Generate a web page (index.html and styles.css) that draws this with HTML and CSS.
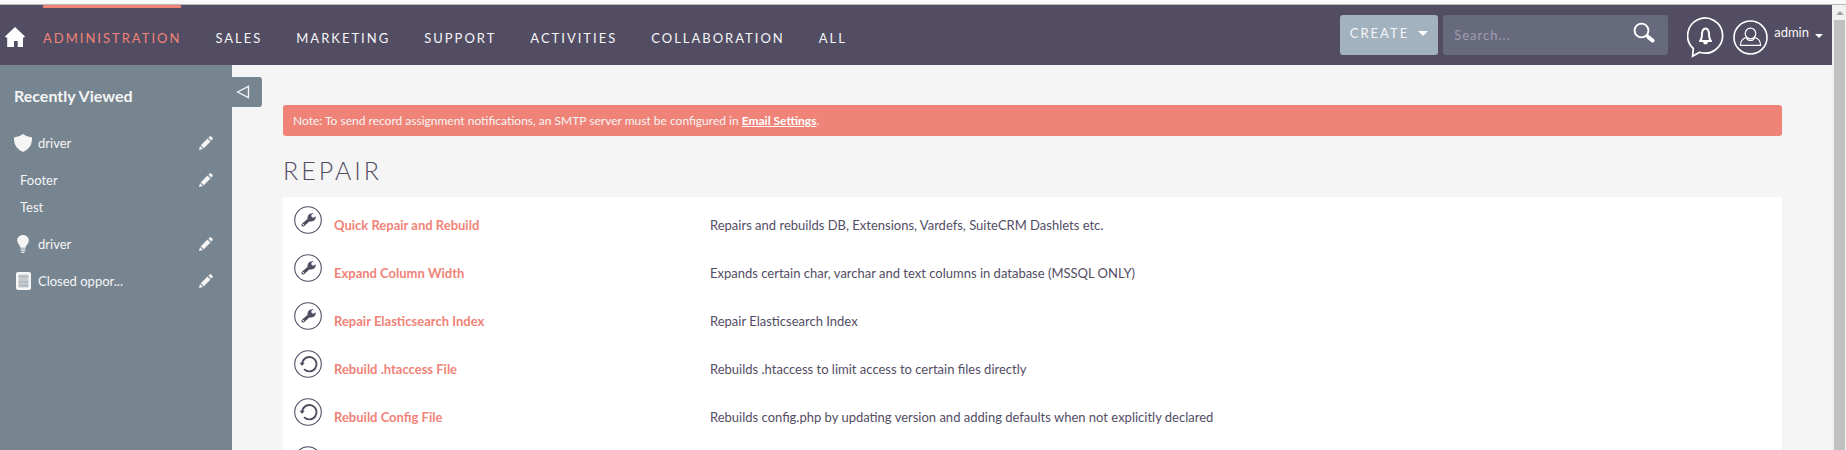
FILE: index.html
```html
<!DOCTYPE html>
<html lang="en">
  <head>
    <meta charset="UTF-8" />
    <title>SuiteCRM - Repair</title>
    <link rel="stylesheet" href="styles.css">
  </head>
  <body>
    <!-- shared icons -->
    <svg class="sprite" aria-hidden="true">
      <symbol id="pencil" viewBox="0 0 14 14">
        <path d="M0 14l1-4 2.900 2.900zM1.800 9.200l6.700-6.700 3 3-6.700 6.700zM9.400 1.700l1.300-1.300q.7-.7 1.400 0l1.500 1.500q.7.7 0 1.400l-1.300 1.300z" />
      </symbol>
      <symbol id="wrench" viewBox="0 0 28 28">
        <circle cx="14" cy="14" r="13.300" fill="none" stroke="currentColor" stroke-width="1.100" />
        <path d="M7.900 19.900a1.700 1.700 0 0 1 .3-2.500l5.400-4.700c-.4-2.700 1.300-5.300 4.800-5.500l1.300.1-2.400 1.700.4 2 1.800.8 2.200-1.500c.4 3.200-1.700 5.400-5 5.200l-1.300-.1-5 4.600a1.700 1.700 0 0 1-2.500-.1z" />
        <circle cx="9.400" cy="18.700" r=".7" fill="#fff" />
      </symbol>
      <symbol id="undo" viewBox="0 0 28 28">
        <circle cx="14" cy="14" r="13.300" fill="none" stroke="currentColor" stroke-width="1.100" />
        <path d="M8.200 13.500a7.200 7.200 0 1 1 1.900 5.600" fill="none" stroke="currentColor" stroke-width="1.900" />
        <path d="M5.500 12.800h5.200l-2.600 3.300z" />
      </symbol>
    </svg>

    <div class="window">
      <div class="page">
        <header class="navbar">
          <a class="home" href="#" aria-label="Home">
            <svg width="20" height="20" viewBox="0 0 20 20"><path d="M10 0l10 9.500-1 1H18V20h-5.300v-6H9v6H2.200v-9.500H1l-1-1z" /></svg>
          </a>
          <nav class="menu">
            <a class="active" href="#">Administration</a>
            <a href="#">Sales</a>
            <a href="#">Marketing</a>
            <a href="#">Support</a>
            <a href="#">Activities</a>
            <a href="#">Collaboration</a>
            <a href="#">All</a>
          </nav>
          <div class="tools">
            <button class="create" type="button">Create <span class="caret"></span></button>
            <form class="search">
              <input type="text" name="query" placeholder="Search..." aria-label="Search" />
              <button type="button" aria-label="Search">
                <svg width="22" height="22" viewBox="0 0 22 22" fill="none" stroke="#fff">
                  <circle cx="8.500" cy="8.500" r="6.900" stroke-width="1.900" />
                  <path d="M13.500 13.500l1.500 1.500" stroke-width="2" />
                  <path d="M15.500 15.200l4 3.300" stroke-width="4" stroke-linecap="round" />
                </svg>
              </button>
            </form>
            <button class="round alerts" type="button" aria-label="Notifications">
              <svg width="37" height="41" viewBox="0 0 37 41" fill="none" stroke="#fff">
                <path d="M6.300 31.500A17.500 17.500 0 1 1 12.600 35.200L5.600 39.300z" stroke-width="1.700" />
                <path d="M13 24q1.900-1.700 1.900-5.500 0-7 3.600-7t3.600 7q0 3.800 1.900 5.500z" stroke-width="2" stroke-linejoin="round" />
                <path d="M16 25h5l-1 2.300h-3z" fill="#fff" stroke="none" />
              </svg>
            </button>
            <button class="round user" type="button">
              <svg width="35" height="35" viewBox="0 0 35 35" fill="none" stroke="#fff">
                <circle cx="17.500" cy="17.500" r="16.500" stroke-width="1.600" />
                <circle cx="17.500" cy="13.500" r="5.300" stroke-width="1.200" />
                <path d="M13.300 17.500C9 18.600 7.500 21 7.500 25.300h20c0-4.300-1.500-6.700-5.800-7.800q-1 3-4.200 3t-4.200-3z" stroke-width="1.200" />
              </svg>
              <span>admin</span>
              <span class="caret small"></span>
            </button>
          </div>
        </header>

        <div class="content">
          <aside class="sidebar">
            <h2>Recently Viewed</h2>
            <ul>
              <li>
                <svg class="type" width="18" height="18" viewBox="0 0 18 18"><path d="M9 0q3.500 3 9 3.500Q18.500 14 9 18-.5 14 0 3.500 5.500 3 9 0z" /></svg>
                <a href="#">driver</a>
                <a class="edit" href="#" aria-label="Edit driver"><svg width="14" height="14"><use href="#pencil" /></svg></a>
              </li>
              <li class="plain compact">
                <a href="#">Footer</a>
                <a class="edit" href="#" aria-label="Edit Footer"><svg width="14" height="14"><use href="#pencil" /></svg></a>
              </li>
              <li class="plain">
                <a href="#">Test</a>
              </li>
              <li>
                <svg class="type" width="18" height="18" viewBox="0 0 18 18"><path d="M9 0c3.300 0 5.800 2.300 5.800 5.600 0 3-2.600 4.300-3.300 7.200h-5C5.800 9.900 3.200 8.600 3.200 5.600 3.200 2.300 5.700 0 9 0zM6.500 13.500h5v1h-5zM6.700 15.200h4.600v1H6.700zM7.500 17h3v1h-3z" /></svg>
                <a href="#">driver</a>
                <a class="edit" href="#" aria-label="Edit driver"><svg width="14" height="14"><use href="#pencil" /></svg></a>
              </li>
              <li>
                <svg class="type" width="18" height="18" viewBox="0 0 18 18">
                  <rect x="2" width="15" height="18" rx="2" />
                  <path d="M4.500 2.500h10v13h-10z" fill="#c3cacf" />
                  <path d="M4.500 4.500h10M4.500 10h10M4.500 13.500h10" stroke="#a9b2b8" stroke-width="1" />
                </svg>
                <a href="#">Closed oppor...</a>
                <a class="edit" href="#" aria-label="Edit Closed oppor..."><svg width="14" height="14"><use href="#pencil" /></svg></a>
              </li>
            </ul>
          </aside>

          <button class="toggle" type="button" aria-label="Collapse sidebar">
            <svg width="14" height="14" viewBox="0 0 14 14"><path d="M1.500 7L12.500 1.300v11.400z" fill="none" stroke="#f5f5f5" stroke-width="1.300" /></svg>
          </button>

          <main>
            <p class="note">Note: To send record assignment notifications, an SMTP server must be configured in <a href="#">Email Settings</a>.</p>
            <h1>Repair</h1>
            <table>
              <tr>
                <td class="icon"><svg width="28" height="28"><use href="#wrench" /></svg></td>
                <td class="name"><a href="#">Quick Repair and Rebuild</a></td>
                <td>Repairs and rebuilds DB, Extensions, Vardefs, SuiteCRM Dashlets etc.</td>
              </tr>
              <tr>
                <td class="icon"><svg width="28" height="28"><use href="#wrench" /></svg></td>
                <td class="name"><a href="#">Expand Column Width</a></td>
                <td>Expands certain char, varchar and text columns in database (MSSQL ONLY)</td>
              </tr>
              <tr>
                <td class="icon"><svg width="28" height="28"><use href="#wrench" /></svg></td>
                <td class="name"><a href="#">Repair Elasticsearch Index</a></td>
                <td>Repair Elasticsearch Index</td>
              </tr>
              <tr>
                <td class="icon"><svg width="28" height="28"><use href="#undo" /></svg></td>
                <td class="name"><a href="#">Rebuild .htaccess File</a></td>
                <td>Rebuilds .htaccess to limit access to certain files directly</td>
              </tr>
              <tr>
                <td class="icon"><svg width="28" height="28"><use href="#undo" /></svg></td>
                <td class="name"><a href="#">Rebuild Config File</a></td>
                <td>Rebuilds config.php by updating version and adding defaults when not explicitly declared</td>
              </tr>
              <tr>
                <td class="icon"><svg width="28" height="28"><use href="#undo" /></svg></td>
                <td class="name"></td>
                <td></td>
              </tr>
            </table>
          </main>
        </div>
      </div>

      <div class="scrollbar">
        <span class="arrow"></span>
        <div class="thumb"></div>
      </div>
    </div>
  </body>
</html>
```

FILE: styles.css
```css
* {
  box-sizing: border-box;
}

body {
  margin: 0;
  font-family: Lato, sans-serif;
  font-size: 13px;
  line-height: 20px;
  color: #534d64;
  background: #f5f5f5;
}

a {
  color: inherit;
  text-decoration: none;
}

button {
  border: 0;
  padding: 0;
  font: inherit;
  color: inherit;
  background: none;
}

svg {
  display: block;
  flex: none;
}

.sprite {
  position: absolute;
  width: 0;
  height: 0;
}

.window {
  display: flex;
  height: 100vh;
  overflow: hidden;
  border-top: 4px solid #f9f9f9;
}

.page {
  flex: 1;
  display: flex;
  flex-direction: column;
  min-width: 0;
  border-top: 1px solid #b9b9b9;
}

/* top bar */
.navbar {
  flex: none;
  display: flex;
  height: 60px;
  padding: 0 9px 0 5px;
  color: #f5f5f5;
  background: #534d64;
}

.home {
  padding-top: 22px;
  margin-right: 18px;
  fill: #fff;
}

.menu {
  display: flex;
  gap: 34px;
  letter-spacing: 2px;
  text-transform: uppercase;
}

.menu a {
  padding-top: 20px;
  border-top: 3px solid transparent;
}

.menu .active {
  color: #f08377;
  border-top-color: #f08377;
}

.tools {
  display: flex;
  align-items: flex-start;
  margin-left: auto;
  padding-top: 10px;
}

.create {
  display: flex;
  align-items: center;
  gap: 9px;
  height: 40px;
  padding: 0 10px 4px;
  border-radius: 3px;
  letter-spacing: 2px;
  text-transform: uppercase;
  color: #f5f5f5;
  background: #a3b2bf;
}

.caret {
  border: 5px solid transparent;
  border-top-color: #fff;
  border-bottom: 0;
}

.caret.small {
  border-width: 4px 4px 0;
}

.search {
  display: flex;
  align-items: center;
  width: 225px;
  height: 40px;
  margin-left: 5px;
  padding: 0 13px 0 11px;
  border-radius: 3px;
  background: #676a7c;
}

.search input {
  flex: 1;
  min-width: 0;
  padding: 0;
  border: 0;
  outline: 0;
  font: inherit;
  letter-spacing: 1px;
  color: #fff;
  background: none;
}

.search input::placeholder {
  color: #9f9cb3;
}

.search button {
  padding-bottom: 4px;
}

.round {
  display: flex;
  gap: 6px;
}

.alerts {
  margin: 2px 9px 0 19px;
}

.user {
  padding-top: 5px;
}

.user .caret {
  margin-top: 14px;
}

.user span:not(.caret) {
  padding-top: 2px;
}

/* sidebar */
.content {
  flex: 1;
  display: flex;
  align-items: flex-start;
  min-height: 0;
}

.sidebar {
  align-self: stretch;
  width: 232px;
  padding: 21px 19px 0 14px;
  color: #f5f5f5;
  background: #778591;
}

.sidebar h2 {
  margin: 0 0 27px;
  font-size: 16px;
  line-height: 20px;
}

.sidebar ul {
  margin: 0;
  padding: 0;
  list-style: none;
}

.sidebar li {
  display: flex;
  align-items: center;
  height: 20px;
  margin-bottom: 17px;
}

.sidebar .compact {
  margin-bottom: 7px;
}

.sidebar .plain {
  padding-left: 6px;
}

.type {
  margin-right: 6px;
  fill: #f5f5f5;
}

.edit {
  margin-left: auto;
  fill: #f5f5f5;
}

.toggle {
  width: 30px;
  height: 30px;
  margin-top: 12px;
  padding-left: 4px;
  border-radius: 0 3px 3px 0;
  background: #778591;
}

/* main area */
main {
  flex: 1;
  padding: 40px 50px 0 21px;
}

.note {
  margin: 0;
  padding: 6px 10px 5px;
  border-radius: 3px;
  font-size: 12px;
  color: #f5f5f5;
  background: #f08377;
}

.note a {
  font-weight: bold;
  color: #fff;
  text-decoration: underline;
}

h1 {
  margin: 19px 0 12px;
  font-size: 25px;
  font-weight: 300;
  line-height: 30px;
  letter-spacing: 3px;
  text-transform: uppercase;
}

table {
  width: 100%;
  border-collapse: collapse;
  background: #fff;
}

td {
  height: 48px;
  padding: 18px 0 0;
  vertical-align: top;
}

.icon {
  width: 51px;
  padding: 9px 0 0 11px;
  color: #534d64;
  fill: #534d64;
}

.name {
  width: 376px;
  font-weight: bold;
  color: #f08377;
}

/* scrollbar */
.scrollbar {
  width: 14px;
  padding: 0 1px 0 2px;
  border-top: 1px solid #b9b9b9;
  background: #f1f1f1;
}

.arrow {
  display: block;
  width: 0;
  margin: 6px auto 5px;
  border: 4px solid transparent;
  border-top: 0;
  border-bottom-color: #a3a3a3;
}

.thumb {
  height: 100%;
  background: #c1c1c1;
}
```
